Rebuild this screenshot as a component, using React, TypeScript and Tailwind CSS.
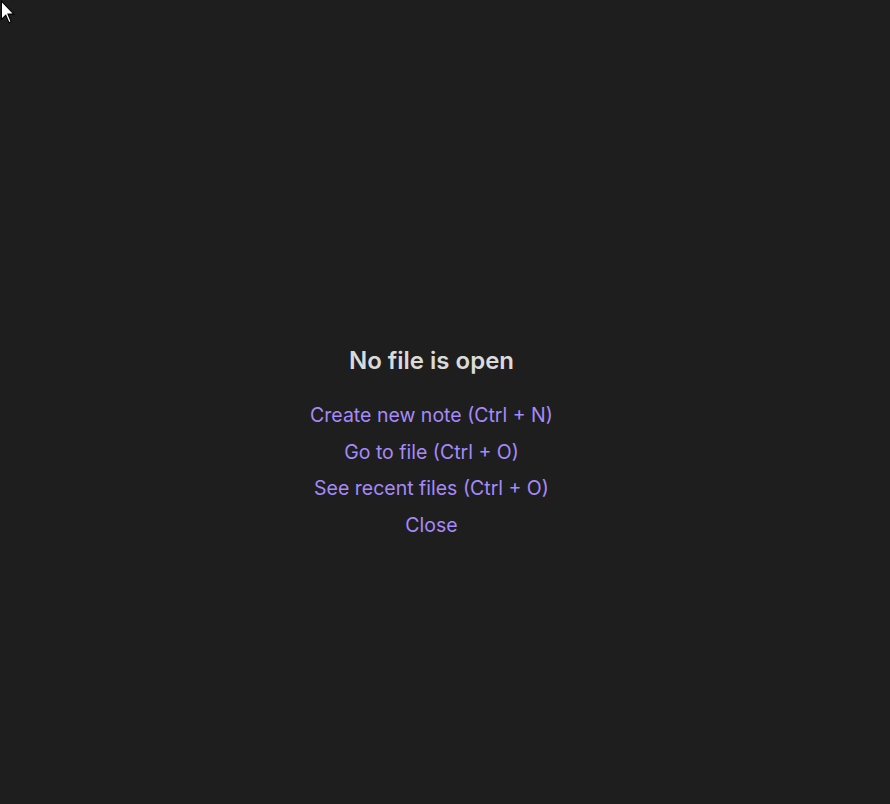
import React from 'react';

const actions = [
  'Create new note (Ctrl + N)',
  'Go to file (Ctrl + O)',
  'See recent files (Ctrl + O)',
  'Close',
];

export default function App() {
  return (
    <div className="relative h-[804px] w-[890px] overflow-hidden bg-[#1e1e1e] font-['Inter',sans-serif]">
      {/* mouse pointer left in the capture */}
      <svg className="absolute left-0 top-0" width="18" height="26" viewBox="0 0 16 24">
        <path d="M1 1 L1 18 L5 14 L8 21 L10 20 L7 13 L12.5 13 Z" fill="#fff" stroke="#000" strokeWidth="1" />
      </svg>

      <div className="flex h-full flex-col items-center pr-[27px] pt-[345px]">
        <div className="text-[24px] font-semibold leading-[32px] text-[#dadada]">No file is open</div>
        <div className="mt-[20px] flex flex-col items-center">
          {actions.map((a) => (
            <div key={a} className="my-[5px] cursor-pointer text-[19.5px] leading-[26.5px] text-[#a68af9]">
              {a}
            </div>
          ))}
        </div>
      </div>
    </div>
  );
}
